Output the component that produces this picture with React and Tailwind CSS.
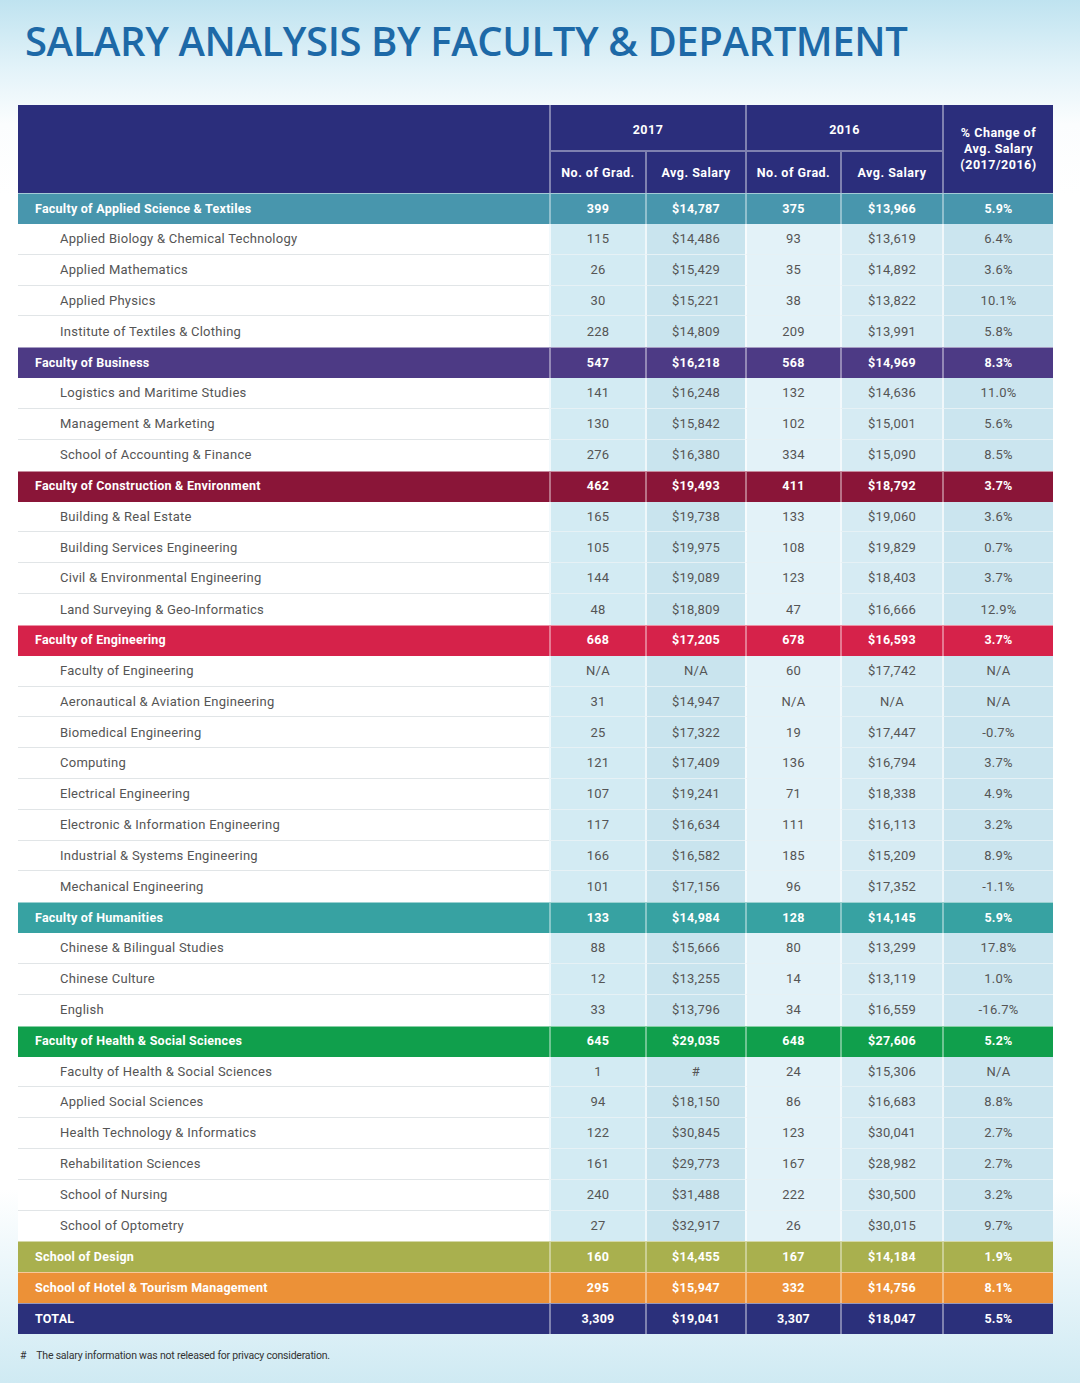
import React from "react";

// Faculty band colours
const BAND = {
  applied: "bg-[#4896ad]",
  business: "bg-[#4d3a85]",
  construction: "bg-[#8a1538]",
  engineering: "bg-[#d6224a]",
  humanities: "bg-[#37a2a2]",
  health: "bg-[#109f4c]",
  design: "bg-[#a9b04e]",
  hotel: "bg-[#ec9137]",
  total: "bg-[#2b307b]",
};

const COL_BG = ["bg-[#d3ebf3]", "bg-[#c9e4ee]", "bg-[#e3f2f8]", "bg-[#d6ebf3]", "bg-[#cbe5ef]"];

const GROUPS = [
  {
    band: "applied",
    row: ["Faculty of Applied Science & Textiles", "399", "$14,787", "375", "$13,966", "5.9%"],
    depts: [
      ["Applied Biology & Chemical Technology", "115", "$14,486", "93", "$13,619", "6.4%"],
      ["Applied Mathematics", "26", "$15,429", "35", "$14,892", "3.6%"],
      ["Applied Physics", "30", "$15,221", "38", "$13,822", "10.1%"],
      ["Institute of Textiles & Clothing", "228", "$14,809", "209", "$13,991", "5.8%"],
    ],
  },
  {
    band: "business",
    row: ["Faculty of Business", "547", "$16,218", "568", "$14,969", "8.3%"],
    depts: [
      ["Logistics and Maritime Studies", "141", "$16,248", "132", "$14,636", "11.0%"],
      ["Management & Marketing", "130", "$15,842", "102", "$15,001", "5.6%"],
      ["School of Accounting & Finance", "276", "$16,380", "334", "$15,090", "8.5%"],
    ],
  },
  {
    band: "construction",
    row: ["Faculty of Construction & Environment", "462", "$19,493", "411", "$18,792", "3.7%"],
    depts: [
      ["Building & Real Estate", "165", "$19,738", "133", "$19,060", "3.6%"],
      ["Building Services Engineering", "105", "$19,975", "108", "$19,829", "0.7%"],
      ["Civil & Environmental Engineering", "144", "$19,089", "123", "$18,403", "3.7%"],
      ["Land Surveying & Geo-Informatics", "48", "$18,809", "47", "$16,666", "12.9%"],
    ],
  },
  {
    band: "engineering",
    row: ["Faculty of Engineering", "668", "$17,205", "678", "$16,593", "3.7%"],
    depts: [
      ["Faculty of Engineering", "N/A", "N/A", "60", "$17,742", "N/A"],
      ["Aeronautical & Aviation Engineering", "31", "$14,947", "N/A", "N/A", "N/A"],
      ["Biomedical Engineering", "25", "$17,322", "19", "$17,447", "-0.7%"],
      ["Computing", "121", "$17,409", "136", "$16,794", "3.7%"],
      ["Electrical Engineering", "107", "$19,241", "71", "$18,338", "4.9%"],
      ["Electronic & Information Engineering", "117", "$16,634", "111", "$16,113", "3.2%"],
      ["Industrial & Systems Engineering", "166", "$16,582", "185", "$15,209", "8.9%"],
      ["Mechanical Engineering", "101", "$17,156", "96", "$17,352", "-1.1%"],
    ],
  },
  {
    band: "humanities",
    row: ["Faculty of Humanities", "133", "$14,984", "128", "$14,145", "5.9%"],
    depts: [
      ["Chinese & Bilingual Studies", "88", "$15,666", "80", "$13,299", "17.8%"],
      ["Chinese Culture", "12", "$13,255", "14", "$13,119", "1.0%"],
      ["English", "33", "$13,796", "34", "$16,559", "-16.7%"],
    ],
  },
  {
    band: "health",
    row: ["Faculty of Health & Social Sciences", "645", "$29,035", "648", "$27,606", "5.2%"],
    depts: [
      ["Faculty of Health & Social Sciences", "1", "#", "24", "$15,306", "N/A"],
      ["Applied Social Sciences", "94", "$18,150", "86", "$16,683", "8.8%"],
      ["Health Technology & Informatics", "122", "$30,845", "123", "$30,041", "2.7%"],
      ["Rehabilitation Sciences", "161", "$29,773", "167", "$28,982", "2.7%"],
      ["School of Nursing", "240", "$31,488", "222", "$30,500", "3.2%"],
      ["School of Optometry", "27", "$32,917", "26", "$30,015", "9.7%"],
    ],
  },
  { band: "design", row: ["School of Design", "160", "$14,455", "167", "$14,184", "1.9%"], depts: [] },
  { band: "hotel", row: ["School of Hotel & Tourism Management", "295", "$15,947", "332", "$14,756", "8.1%"], depts: [] },
  { band: "total", row: ["TOTAL", "3,309", "$19,041", "3,307", "$18,047", "5.5%"], depts: [] },
];

const GRID = "grid grid-cols-[531px_96px_100px_95px_102px_111px]";

function BandRow({ band, row }) {
  const [name, ...vals] = row;
  return (
    <div className={`${GRID} h-[31px] ${BAND[band]} border-t border-white/50 text-white font-bold text-[12.5px] tracking-[0.02em]`}>
      <div className="flex items-center pl-[17px]">{name}</div>
      {vals.map((v, i) => (
        <div key={i} className="flex items-center justify-center border-l-2 border-white/40">
          {v}
        </div>
      ))}
    </div>
  );
}

function DeptRow({ row, last }) {
  const [name, ...vals] = row;
  return (
    <div className={`${GRID} h-[30.8px] text-[#555] text-[13px] tracking-[0.02em]`}>
      <div className={`flex items-center pl-[42px] bg-white ${last ? "" : "border-b-[1.5px] border-[#e1e5e7]"}`}>
        {name}
      </div>
      {vals.map((v, i) => (
        <div
          key={i}
          className={`flex items-center justify-center border-l-2 border-white/70 ${COL_BG[i]} ${
            last ? "" : "border-b-[1.5px] border-b-[#e6f1f5]"
          }`}
        >
          {v}
        </div>
      ))}
    </div>
  );
}

export default function App() {
  return (
    <div
      className="w-[1080px] h-[1383px] overflow-hidden bg-[linear-gradient(to_bottom,#bfe3f0_0%,#e3f3f9_5%,#fbfdfe_9%,#ffffff_14%,#ffffff_86%,#eaf6fa_92%,#cfeaf3_100%)]"
      style={{ fontFamily: "Roboto, 'Open Sans', sans-serif" }}
    >
      <h1
        className="pt-[17px] pl-[25px] text-[40px] leading-[48px] font-semibold text-[#1d69a7] tracking-[-0.01em] whitespace-nowrap"
        style={{ fontFamily: "'Open Sans', sans-serif" }}
      >
        SALARY ANALYSIS BY FACULTY &amp; DEPARTMENT
      </h1>

      <div className="ml-[18px] mt-[40px] w-[1035px]">
        {/* Header */}
        <div className={`${GRID} grid-rows-[45px_43px] bg-[#2b2e7c] text-white font-bold text-[12.5px] tracking-[0.04em]`}>
          <div className="row-span-2" />
          <div className="col-span-2 flex items-center justify-center border-l-2 border-white/40 pt-[6px]">2017</div>
          <div className="col-span-2 flex items-center justify-center border-l-2 border-white/40 pt-[6px]">2016</div>
          <div className="row-span-2 flex items-center justify-center text-center leading-[16px] border-l-2 border-white/40">
            % Change of
            <br />
            Avg. Salary
            <br />
            (2017/2016)
          </div>
          <div className="flex items-center justify-center border-l-2 border-t-2 border-white/40 pt-[2px]">No. of Grad.</div>
          <div className="flex items-center justify-center border-l-2 border-t-2 border-white/40 pt-[2px]">Avg. Salary</div>
          <div className="flex items-center justify-center border-l-2 border-t-2 border-white/40 pt-[2px]">No. of Grad.</div>
          <div className="flex items-center justify-center border-l-2 border-t-2 border-white/40 pt-[2px]">Avg. Salary</div>
        </div>

        {GROUPS.map((g) => (
          <div key={g.row[0]}>
            <BandRow band={g.band} row={g.row} />
            {g.depts.map((d, i) => (
              <DeptRow key={d[0] + i} row={d} last={i === g.depts.length - 1} />
            ))}
          </div>
        ))}
      </div>

      <p className="mt-[14px] pl-[20px] text-[10.5px] text-[#333] tracking-[-0.02em]">
        <span className="mr-[10px]">#</span>The salary information was not released for privacy consideration.
      </p>
    </div>
  );
}
